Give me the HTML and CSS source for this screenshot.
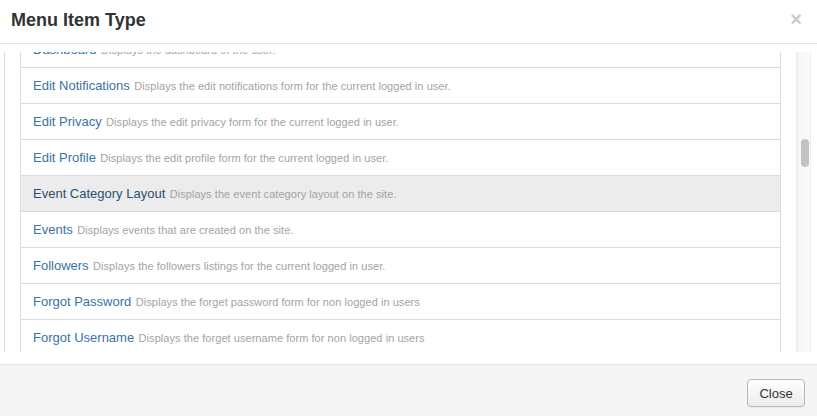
FILE: index.html
```html
<!DOCTYPE html>
<html lang="en">
<head>
<meta charset="utf-8">
<title>Menu Item Type</title>
<link rel="stylesheet" href="styles.css">
</head>
<body>
<div class="modal">
  <div class="modal-header">
    <h3 class="modal-title">Menu Item Type</h3>
    <button class="close" type="button" aria-label="Close">&times;</button>
  </div>
  <div class="modal-body">
    <div class="frame">
      <div class="viewport">
        <ul class="list">
          <li class="item"><a href="#">Dashboard</a> <small>Displays the dashboard of the user.</small></li>
          <li class="item"><a href="#">Edit Notifications</a> <small>Displays the edit notifications form for the current logged in user.</small></li>
          <li class="item"><a href="#">Edit Privacy</a> <small>Displays the edit privacy form for the current logged in user.</small></li>
          <li class="item"><a href="#">Edit Profile</a> <small>Displays the edit profile form for the current logged in user.</small></li>
          <li class="item active"><a href="#">Event Category Layout</a> <small>Displays the event category layout on the site.</small></li>
          <li class="item"><a href="#">Events</a> <small>Displays events that are created on the site.</small></li>
          <li class="item"><a href="#">Followers</a> <small>Displays the followers listings for the current logged in user.</small></li>
          <li class="item"><a href="#">Forgot Password</a> <small>Displays the forget password form for non logged in users</small></li>
          <li class="item"><a href="#">Forgot Username</a> <small>Displays the forget username form for non logged in users</small></li>
        </ul>
      </div>
      <div class="scrollbar"><div class="thumb"></div></div>
    </div>
  </div>
  <div class="modal-footer">
    <button class="btn" type="button">Close</button>
  </div>
</div>
</body>
</html>
```

FILE: styles.css
```css
* { box-sizing: border-box; }
html, body { margin: 0; padding: 0; background: #fff; }
body {
  font-family: "Liberation Sans", Arial, Helvetica, sans-serif;
  color: #333;
  width: 817px;
  height: 416px;
  overflow: hidden;
}
.modal { display: flex; flex-direction: column; width: 817px; }
.modal-header {
  display: flex;
  align-items: flex-start;
  justify-content: space-between;
  height: 44px;
  padding: 10px 15px 0 11px;
  border-bottom: 1px solid #e5e5e5;
}
.modal-title {
  margin: 0;
  font-size: 18px;
  line-height: 20px;
  font-weight: bold;
  color: #333;
}
.close {
  border: 0;
  background: none;
  padding: 0;
  margin-top: -1px;
  font-family: "Liberation Sans", Arial, sans-serif;
  font-size: 20px;
  font-weight: bold;
  line-height: 20px;
  color: #000;
  opacity: 0.2;
  cursor: pointer;
}
.modal-body {
  padding: 8px 6px 12px 4px;
}
.frame {
  display: flex;
  height: 300px;
  border-left: 1px solid #dcdcdc;
}
.viewport {
  flex: 1;
  overflow: hidden;
  padding: 0 15px;
}
.list {
  list-style: none;
  margin: -20px 0 0 0;
  padding: 0;
  border-left: 1px solid #dcdcdc;
  border-right: 1px solid #dcdcdc;
  min-height: 330px;
}
.item {
  padding: 7px 12px 9px;
  line-height: 19px;
  height: 36px;
  border-bottom: 1px solid #dcdcdc;
  white-space: nowrap;
}
.item a {
  font-size: 13px;
  color: #3a72a8;
  text-decoration: none;
}
.item small {
  font-size: 11px;
  letter-spacing: 0.05px;
  color: #a3a3a3;
}
.item.active { background: #ececec; }
.item.active a { color: #2a4f74; }
.scrollbar {
  width: 15px;
  flex: none;
  background: linear-gradient(to right, #e6e6e6 0, #f0f0f0 1px, #f7f7f7 4px, #fafafa 100%);
  border-right: 1px solid #eeeeee;
  padding: 87px 0 0 5px;
}
.thumb {
  width: 8px;
  height: 28px;
  border-radius: 4px;
  background: #c2c2c2;
}
.modal-footer {
  display: flex;
  justify-content: flex-end;
  padding: 14px 12px 15px;
  background: #f5f5f5;
  border-top: 1px solid #e5e5e5;
}
.btn {
  width: 58px;
  height: 28px;
  font-family: "Liberation Sans", Arial, sans-serif;
  font-size: 13px;
  color: #333;
  border: 1px solid #b8b8b8;
  border-radius: 4px;
  background: linear-gradient(#ffffff, #ebebeb);
  box-shadow: 0 1px 1px rgba(0,0,0,0.05);
  padding: 0;
}
```
